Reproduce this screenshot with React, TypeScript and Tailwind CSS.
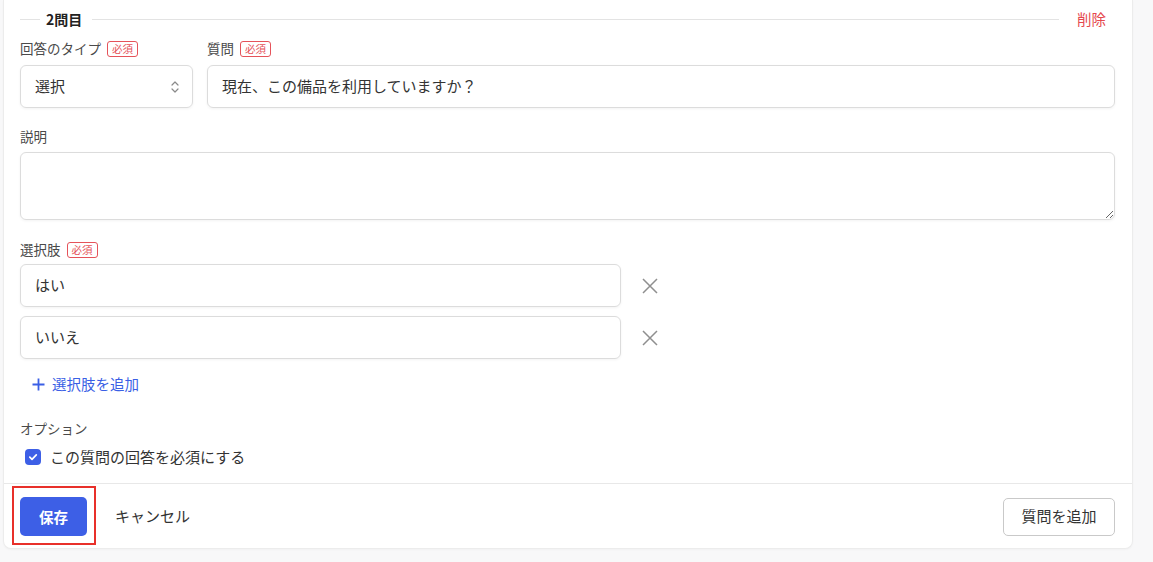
import React from "react";

const font = { fontFamily: '"Noto Sans CJK JP", "Noto Sans", sans-serif' };

function Badge() {
  return (
    <span className="ml-[6px] inline-flex h-[16px] items-center rounded-[3px] border border-[#e5535a] px-[4px] text-[10.5px] leading-none text-[#e5535a]">
      必須
    </span>
  );
}

function Label({ children, badge }: { children: React.ReactNode; badge?: boolean }) {
  return (
    <div className="flex h-[18px] items-center text-[13.5px] leading-none text-[#4a4a4a]">
      <span>{children}</span>
      {badge && <Badge />}
    </div>
  );
}

function Cross() {
  return (
    <svg width="16" height="16" viewBox="0 0 16 16" className="shrink-0">
      <path d="M1 1 L15 15 M15 1 L1 15" stroke="#8f8f8f" strokeWidth="1.5" fill="none" />
    </svg>
  );
}

export default function App() {
  return (
    <div className="h-[562px] w-full overflow-hidden bg-[#f8f8f9]" style={font}>
      <div className="ml-[3px] w-[1130px] rounded-b-lg border-x border-b border-[#ececec] bg-white shadow-[0_1px_2px_rgba(0,0,0,0.03)]">
        <div className="pl-[16px] pr-[17px] pt-[8px]">
          {/* heading */}
          <div className="flex h-[22px] items-center">
            <div className="h-px w-[20px] bg-[#e3e3e3]" />
            <span className="ml-[6px] text-[14px] font-bold text-[#222]">2問目</span>
            <div className="ml-[10px] h-px flex-1 bg-[#e3e3e3]" />
            <span className="ml-[18px] mr-[9px] text-[14.5px] text-[#e5484d]">削除</span>
          </div>

          {/* type + question */}
          <div className="mt-[10px] flex gap-[14px]">
            <div className="w-[173px] shrink-0">
              <Label badge>回答のタイプ</Label>
              <div className="mt-[7px] flex h-[43px] items-center justify-between rounded-md border border-[#dcdcdc] pl-[14px] pr-[12px] shadow-[0_1px_3px_rgba(0,0,0,0.05)]">
                <span className="text-[15px] text-[#333]">選択</span>
                <svg width="10" height="14" viewBox="0 0 10 14">
                  <path d="M2 5 L5 2 L8 5 M2 9 L5 12 L8 9" stroke="#8a8a8a" strokeWidth="1.2" fill="none" strokeLinecap="round" strokeLinejoin="round" />
                </svg>
              </div>
            </div>
            <div className="flex-1">
              <Label badge>質問</Label>
              <div className="mt-[7px] flex h-[43px] items-center rounded-md border border-[#dcdcdc] pl-[14px] text-[15px] text-[#333] shadow-[0_1px_3px_rgba(0,0,0,0.05)]">
                現在、この備品を利用していますか？
              </div>
            </div>
          </div>

          {/* description */}
          <div className="mt-[20px]">
            <Label>説明</Label>
            <textarea
              className="mt-[6px] block h-[68px] w-full rounded-md border border-[#dcdcdc] shadow-[0_1px_3px_rgba(0,0,0,0.05)] outline-none"
              defaultValue=""
            />
          </div>

          {/* choices */}
          <div className="mt-[21px]">
            <Label badge>選択肢</Label>
            <div className="mt-[5px] flex flex-col gap-[9px]">
              {["はい", "いいえ"].map((t) => (
                <div key={t} className="flex items-center">
                  <div className="flex h-[43px] w-[601px] items-center rounded-md border border-[#dcdcdc] pl-[14px] text-[15px] text-[#333] shadow-[0_1px_3px_rgba(0,0,0,0.05)]">
                    {t}
                  </div>
                  <div className="ml-[21px]">
                    <Cross />
                  </div>
                </div>
              ))}
            </div>
            <div className="mt-[15px] flex h-[20px] items-center pl-[12px] text-[14.5px] text-[#3a5fe5]">
              <svg width="13" height="13" viewBox="0 0 13 13">
                <path d="M6.5 0.5 V12.5 M0.5 6.5 H12.5" stroke="#3a5fe5" strokeWidth="1.8" fill="none" />
              </svg>
              <span className="ml-[7px]">選択肢を追加</span>
            </div>
          </div>

          {/* options */}
          <div className="mt-[26px]">
            <Label>オプション</Label>
            <div className="mt-[9px] flex h-[20px] items-center pl-[5px]">
              <div className="flex h-[16px] w-[16px] items-center justify-center rounded-[4px] bg-[#3d5fe6]">
                <svg width="10" height="10" viewBox="0 0 10 10">
                  <path d="M1.8 5.2 L4 7.3 L8.3 2.8" stroke="white" strokeWidth="1.7" fill="none" strokeLinecap="round" strokeLinejoin="round" />
                </svg>
              </div>
              <span className="ml-[9px] text-[15px] text-[#333]">この質問の回答を必須にする</span>
            </div>
          </div>
        </div>

        {/* footer */}
        <div className="mt-[16px] border-t border-[#e8e8e8] pl-[16px] pr-[17px] pb-[12px] pt-[13px]">
          <div className="flex items-center">
            <div className="relative">
              <button className="flex h-[39px] w-[67px] items-center justify-center rounded-[5px] bg-[#3d5fe6] text-[14.5px] font-bold text-white">
                保存
              </button>
              <div className="pointer-events-none absolute -left-[8px] -top-[11px] h-[59px] w-[84px] border-2 border-[#e8302a]" />
            </div>
            <span className="ml-[28px] text-[15px] text-[#333]">キャンセル</span>
            <div className="flex-1" />
            <button className="flex h-[38px] w-[112px] items-center justify-center rounded-[5px] border border-[#c9c9c9] bg-white text-[15px] text-[#333]">
              質問を追加
            </button>
          </div>
        </div>
      </div>
    </div>
  );
}
